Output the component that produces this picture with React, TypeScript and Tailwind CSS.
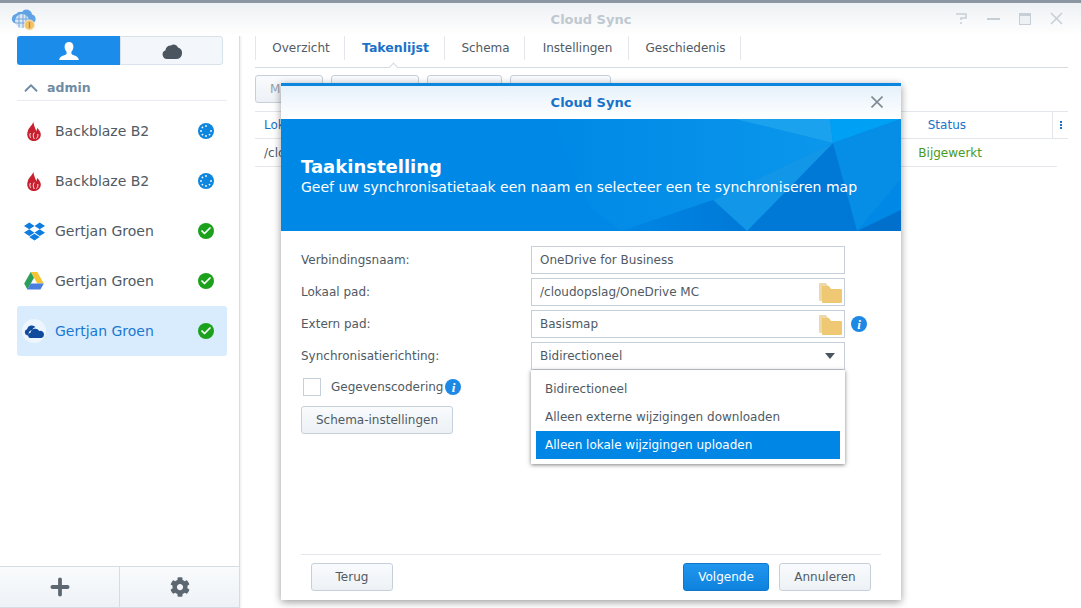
import { Check, ChevronUp, Plus } from "lucide-react";
import { FaCog, FaDropbox } from "react-icons/fa";

function AppIcon() {
  return (
    <svg width="26" height="26" viewBox="0 0 26 26">
      <path d="M6 9a6 6 0 0 1 6-2 5.500 5.500 0 0 1 10 2.500 4.500 4.500 0 0 1 1 8.500H4a5 5 0 0 1 2-9z" fill="#5fa3e6" />
      <circle cx="12" cy="16" r="7" fill="#dbe9f7" />
      <path d="M5 14h14M5 18h14M9 9.500v13M13 9v14M16 10v12" stroke="#6c9fd6" strokeWidth="0.900" />
      <circle cx="19.500" cy="20" r="5" fill="#f2c268" stroke="#fbe7c0" strokeWidth="1" />
      <path d="M19.500 17v6" stroke="#c08a2c" strokeWidth="1.300" />
    </svg>
  );
}

function PersonIcon() {
  return (
    <svg width="20" height="18" viewBox="0 0 20 18" fill="#fff">
      <path d="M10 0c2.800 0 4.400 2 4.400 4.800 0 2-.8 3.800-2 5v1.600c0 .9 1 1.300 3 2 2.200.8 4 1.400 4.400 4.600H.2c.4-3.200 2.200-3.800 4.400-4.600 2-.7 3-1.100 3-2V9.800c-1.200-1.200-2-3-2-5C5.600 2 7.200 0 10 0z" />
    </svg>
  );
}

function CloudIcon() {
  return (
    <svg width="20" height="16" viewBox="0 0 20 16" fill="#4a5560">
      <path d="M5 16a4.500 4.500 0 0 1-1.500-8.700A5 5 0 0 1 9 2.500 4.500 4.500 0 0 1 16 4.500a5.800 5.800 0 0 1 4 6A5.500 5.500 0 0 1 15 16z" />
    </svg>
  );
}

function FlameIcon() {
  return (
    <svg width="14" height="20" viewBox="0 0 14 20" fill="#c8202f">
      <path d="M6 0c1 3-3.500 5.500-5 9.500C-.3 13 .2 15.500 1.500 17.500 3 19.500 5 20 7 20c3.500 0 6.800-2.500 6.800-6.500 0-3-2-4.500-3.300-6.500-.8 1-1 2-.8 3.500C8 8 7 4 6 0z" />
      <path d="M3.500 12c-1 1.500-.8 3 .3 4.800M7.300 11.500c-1.300 2-1.500 4 0 6.500M10.800 13c.3 1.500 0 3-1.300 4.500" stroke="#fff" strokeWidth="0.900" fill="none" />
    </svg>
  );
}

function DriveIcon() {
  return (
    <svg width="20" height="18" viewBox="0 0 20 18">
      <path d="M6.700 0h6.600l6.500 11.500h-6.500z" fill="#f6c532" />
      <path d="M6.700 0l3.300 5.800L3.400 17.500.2 11.500z" fill="#2e9e5b" />
      <path d="M6.600 11.500h13.200l-3.300 6H3.400z" fill="#4a7fe0" />
    </svg>
  );
}

function OneDriveIcon() {
  return (
    <div className="flex h-[24px] w-[24px] items-center justify-center rounded-full bg-[#eef6fd]">
      <svg width="21" height="13" viewBox="0 0 21 13" fill="#0f4a9e">
        <path d="M3.500 10.500A3.200 3.200 0 0 1 3 4.300 5 5 0 0 1 11.500 2a4.500 4.500 0 0 0-3.300 3C5.500 5.300 4 7.500 4.800 10.500z" />
        <path d="M7 13a2.600 2.600 0 0 1-.5-5.200A4.800 4.800 0 0 1 15.300 6a3.600 3.600 0 0 1 4.700 3.500A3.400 3.400 0 0 1 17.500 13z" />
      </svg>
    </div>
  );
}

function SyncBadge() {
  const dots = [0, 45, 90, 135, 180, 225, 270];
  return (
    <svg width="16" height="16" viewBox="0 0 16 16">
      <circle cx="8" cy="8" r="8" fill="#0d86e0" />
      {dots.map((angle) => (
        <circle
          key={angle}
          cx={8 + 5 * Math.cos((angle * Math.PI) / 180)}
          cy={8 + 5 * Math.sin((angle * Math.PI) / 180)}
          r="0.9"
          fill="#fff"
        />
      ))}
    </svg>
  );
}

function DoneBadge() {
  return (
    <div className="flex h-[16px] w-[16px] items-center justify-center rounded-full bg-[#1ba11b]">
      <Check size={12} strokeWidth={3.5} color="#fff" />
    </div>
  );
}

function InfoBadge() {
  return (
    <div className="flex h-[16px] w-[16px] items-center justify-center rounded-full bg-[#1e88e5] font-['Liberation_Serif',serif] text-[13px] leading-none font-bold text-white italic">
      i
    </div>
  );
}

function FolderIcon() {
  return (
    <svg width="23" height="21" viewBox="0 0 23 21">
      <path d="M0 2a1 1 0 0 1 1-1h6l2 3h-5v15H1a1 1 0 0 1-1-1z" fill="#ecd9a8" />
      <path d="M3 4h7l2 3h10a1 1 0 0 1 1 1v12a1 1 0 0 1-1 1H4a1 1 0 0 1-1-1z" fill="#efc873" />
    </svg>
  );
}

const accounts = [
  { name: "Backblaze B2", icon: <FlameIcon />, badge: <SyncBadge /> },
  { name: "Backblaze B2", icon: <FlameIcon />, badge: <SyncBadge /> },
  { name: "Gertjan Groen", icon: <FaDropbox size={21} color="#0d7ee0" />, badge: <DoneBadge /> },
  { name: "Gertjan Groen", icon: <DriveIcon />, badge: <DoneBadge /> },
  { name: "Gertjan Groen", icon: <OneDriveIcon />, badge: <DoneBadge />, active: true },
];

const tabs = [
  { label: "Overzicht", width: "w-[90px]" },
  { label: "Takenlijst", width: "w-[100px]", active: true },
  { label: "Schema", width: "w-[80px]" },
  { label: "Instellingen", width: "w-[104px]" },
  { label: "Geschiedenis", width: "w-[112px]" },
];

const buttonClass =
  "h-[28px] rounded-[3px] border border-[#c6d0da] bg-gradient-to-b from-[#f9fbfd] to-[#edf1f5] text-[12px] text-[#505a64]";
const inputClass =
  "flex h-[28px] w-[314px] items-center justify-between border border-[#c6d0da] bg-white pr-[2px] pl-[8px] text-[12px] text-[#505a64]";
const labelClass = "w-[230px] text-[12px] text-[#505a64]";

function Sidebar() {
  return (
    <aside className="flex h-full w-[240px] shrink-0 flex-col border-r border-[#d5dce3] shadow-[1px_0_2px_rgba(0,0,0,0.08)]">
      <div className="flex-1 pr-[12px] pl-[17px]">
        <div className="flex h-[29px] w-[206px]">
          <div className="flex w-[103px] items-center justify-center rounded-l-[3px] bg-[#1c8ceb]">
            <PersonIcon />
          </div>
          <div className="flex flex-1 items-center justify-center rounded-r-[3px] border border-[#d9e2ea] bg-[#f3f7fb]">
            <CloudIcon />
          </div>
        </div>
        <div className="mt-[7px] flex h-[29px] items-center gap-[5px] border-b border-[#e8ecf0] pt-[4px] pl-[3px] text-[12.500px] font-bold text-[#6f8ca5]">
          <ChevronUp size={22} strokeWidth={2} color="#6f8ca5" />
          admin
        </div>
        <div className="mt-[5px]">
          {accounts.map((account, i) => (
            <div
              key={i}
              className={`flex h-[50px] items-center rounded-[3px] pr-[13px] ${account.active ? "bg-[#d9ecfd] text-[#1a78d2]" : "text-[#505a64]"}`}
            >
              <div className="mr-[4px] flex w-[34px] justify-center">{account.icon}</div>
              <span className="text-[14px]">{account.name}</span>
              <div className="ml-auto">{account.badge}</div>
            </div>
          ))}
        </div>
      </div>
      <div className="flex h-[42px] border-y border-[#d5dce3] bg-gradient-to-b from-[#f9fbfd] to-[#eef2f6]">
        <div className="flex w-[120px] items-center justify-center border-r border-[#d5dce3]">
          <Plus size={26} strokeWidth={3.5} color="#5c6771" />
        </div>
        <div className="flex flex-1 items-center justify-center">
          <FaCog size={20} color="#5c6771" />
        </div>
      </div>
    </aside>
  );
}

function MainPane() {
  return (
    <main className="h-full flex-1 pr-[13px] pl-[15px]">
      <div className="relative flex h-[32px] items-start border-b border-[#d5dadf]">
        {tabs.map((tab, i) => (
          <div
            key={tab.label}
            className={`flex h-[24px] items-center justify-center border-r border-[#e3e7eb] pl-[2px] ${tab.width} ${i === 0 ? "border-l" : ""} ${tab.active ? "text-[12.500px] font-bold text-[#1a72c8]" : "text-[12px] text-[#505a64]"}`}
          >
            {tab.label}
          </div>
        ))}
        <div className="absolute top-[28px] left-[135px] h-[7px] w-[7px] rotate-45 border-t border-l border-[#d5dadf] bg-white" />
      </div>
      <div className="mt-[7px] flex gap-[8px]">
        <div className="h-[28px] w-[68px] rounded-[3px] border border-[#c6d0da] bg-gradient-to-b from-[#f9fbfd] to-[#edf1f5] pl-[14px] text-[12px] leading-[26px] text-[#98a2ac]">
          M
        </div>
        <div className={`${buttonClass} w-[88px]`} />
        <div className={`${buttonClass} w-[75px]`} />
        <div className={`${buttonClass} w-[101px]`} />
      </div>
      <div className="mt-[8px] flex h-[28px] items-center border-y border-[#e3e7eb] text-[12px] text-[#1a72c8]">
        <span className="pl-[9px]">Lokaal</span>
        <span className="ml-auto">Status</span>
        <div className="ml-[86px] flex h-full w-[16px] items-center justify-center border-l border-[#e3e7eb]">
          <div className="flex flex-col gap-[1px]">
            <i className="h-[2px] w-[2px] bg-[#1a72c8]" />
            <i className="h-[2px] w-[2px] bg-[#1a72c8]" />
            <i className="h-[2px] w-[2px] bg-[#1a72c8]" />
          </div>
        </div>
      </div>
      <div className="flex h-[28px] w-[802px] items-center justify-between border-b border-[#e3e7eb] pr-[75px] pl-[9px] text-[12px] text-[#505a64]">
        <span>/cloud</span>
        <span className="text-[#4a9a22]">Bijgewerkt</span>
      </div>
    </main>
  );
}

function Hero() {
  return (
    <div className="relative h-[112px] overflow-hidden bg-[#0088e6]">
      <svg className="absolute inset-0" width="620" height="112" viewBox="0 0 620 112">
        <defs>
          <linearGradient id="wash" x1="0" y1="0" x2="1" y2="0">
            <stop offset="0" stopColor="#0088e6" />
            <stop offset="1" stopColor="#0b97ec" />
          </linearGradient>
          <linearGradient id="lower" x1="0" y1="0" x2="1" y2="0">
            <stop offset="0" stopColor="#0086e4" />
            <stop offset="1" stopColor="#0079d8" />
          </linearGradient>
        </defs>
        <polygon points="269,0 454,0 552,24 432,81 340,112 310,90" fill="url(#wash)" />
        <polygon points="454,0 549,0 552,24" fill="#1aa2ee" />
        <polygon points="549,0 620,0 552,24" fill="#00a0f5" />
        <polygon points="552,24 620,0 620,60 576,112" fill="#068ee6" />
        <polygon points="552,24 576,112 466,112" fill="#0078d6" />
        <polygon points="552,24 466,112 432,81" fill="#1196e8" />
        <polygon points="432,81 466,112 340,112" fill="url(#lower)" />
        <polygon points="620,91 576,112 620,112" fill="#0070cc" />
      </svg>
      <div className="relative pt-[37px] pl-[20px] text-white">
        <div className="text-[18px] leading-[22px] font-bold">Taakinstelling</div>
        <div className="text-[14px] leading-[18px]">
          Geef uw synchronisatietaak een naam en selecteer een te synchroniseren map
        </div>
      </div>
    </div>
  );
}

function TaskDialog() {
  return (
    <div className="absolute top-[83px] left-[281px] flex h-[517px] w-[620px] flex-col border-t-[3px] border-[#0d86e0] bg-white shadow-[0_2px_8px_rgba(0,0,0,0.4)]">
      <div className="relative flex h-[33px] shrink-0 items-center justify-center bg-gradient-to-b from-[#e6f1fb] to-white text-[13px] font-bold text-[#1a72c8]">
        Cloud Sync
        <svg className="absolute top-[10px] right-[18px]" width="12" height="12" viewBox="0 0 12 12">
          <path d="M0.500 0.500l11 11M11.500 0.500l-11 11" stroke="#7f8a94" strokeWidth="1.600" />
        </svg>
      </div>
      <Hero />
      <div className="relative flex-1 px-[20px] pt-[15px]">
        <div className="flex flex-col gap-[4px]">
          <div className="flex items-center">
            <span className={labelClass}>Verbindingsnaam:</span>
            <div className={inputClass}>OneDrive for Business</div>
          </div>
          <div className="flex items-center">
            <span className={labelClass}>Lokaal pad:</span>
            <div className={inputClass}>
              /cloudopslag/OneDrive MC
              <FolderIcon />
            </div>
          </div>
          <div className="flex items-center">
            <span className={labelClass}>Extern pad:</span>
            <div className={inputClass}>
              Basismap
              <FolderIcon />
            </div>
            <div className="ml-[6px]">
              <InfoBadge />
            </div>
          </div>
          <div className="flex items-center">
            <span className={labelClass}>Synchronisatierichting:</span>
            <div className={`${inputClass} border-[#0d7ed0] pr-[9px]`}>
              Bidirectioneel
              <span className="h-0 w-0 border-x-[5px] border-t-[6px] border-x-transparent border-t-[#4a5560]" />
            </div>
          </div>
        </div>
        <div className="mt-[8px] flex h-[18px] items-center pl-[2px]">
          <div className="h-[18px] w-[18px] border border-[#c6d0da]" />
          <span className="ml-[10px] text-[12px] text-[#505a64]">Gegevenscodering</span>
          <div className="ml-[2px]">
            <InfoBadge />
          </div>
        </div>
        <button className={`${buttonClass} mt-[10px] w-[152px]`}>Schema-instellingen</button>

        <div className="absolute top-[139px] left-[250px] flex h-[94px] w-[314px] flex-col bg-white px-[5px] pt-[5px] text-[12px] text-[#505a64] shadow-[0_1px_4px_rgba(0,0,0,0.5)]">
          <div className="flex h-[28px] items-center pl-[9px]">Bidirectioneel</div>
          <div className="flex h-[28px] items-center pl-[9px]">Alleen externe wijzigingen downloaden</div>
          <div className="flex h-[28px] items-center bg-[#0086e5] pl-[9px] font-medium text-white">
            Alleen lokale wijzigingen uploaden
          </div>
        </div>
      </div>
      <div className="mx-[20px] flex h-[46px] shrink-0 items-start justify-between border-t border-[#e3e7eb] px-[10px] pt-[8px]">
        <button className={`${buttonClass} w-[82px]`}>Terug</button>
        <div className="flex gap-[10px]">
          <button className="h-[28px] w-[86px] rounded-[3px] border border-[#0f78cc] bg-gradient-to-b from-[#2196ef] to-[#0d82dc] text-[12px] font-medium text-white">
            Volgende
          </button>
          <button className={`${buttonClass} w-[92px]`}>Annuleren</button>
        </div>
      </div>
    </div>
  );
}

export default function App() {
  return (
    <div className="relative flex h-[608px] w-[1081px] flex-col overflow-hidden border-t-[3px] border-[#8a97a3] bg-white font-['DejaVu_Sans',sans-serif]">
      <header className="relative flex h-[33px] shrink-0 items-center justify-center bg-gradient-to-b from-[#eef1f4] to-white pl-[101px] text-[13px] font-bold text-[#bfc8d0]">
        <div className="absolute top-[2px] left-[10px]">
          <AppIcon />
        </div>
        Cloud Sync
        <div className="absolute top-[9px] right-[18px] flex items-center gap-[19px]">
          <svg width="13" height="13" viewBox="0 0 13 13" fill="none" stroke="#c6ced6" strokeWidth="1.500">
            <path d="M1 2h10v4H6v2M6 10v2" />
          </svg>
          <div className="h-[2px] w-[13px] bg-[#c6ced6]" />
          <div className="h-[12px] w-[12px] border border-t-[3px] border-[#c6ced6] bg-[#eef1f4]" />
          <svg width="13" height="13" viewBox="0 0 13 13" stroke="#c6ced6" strokeWidth="1.500">
            <path d="M1 1l11 11M12 1L1 12" />
          </svg>
        </div>
      </header>
      <div className="flex min-h-0 flex-1">
        <Sidebar />
        <MainPane />
      </div>
      <div className="absolute -top-[3px] left-0">
        <TaskDialog />
      </div>
    </div>
  );
}
